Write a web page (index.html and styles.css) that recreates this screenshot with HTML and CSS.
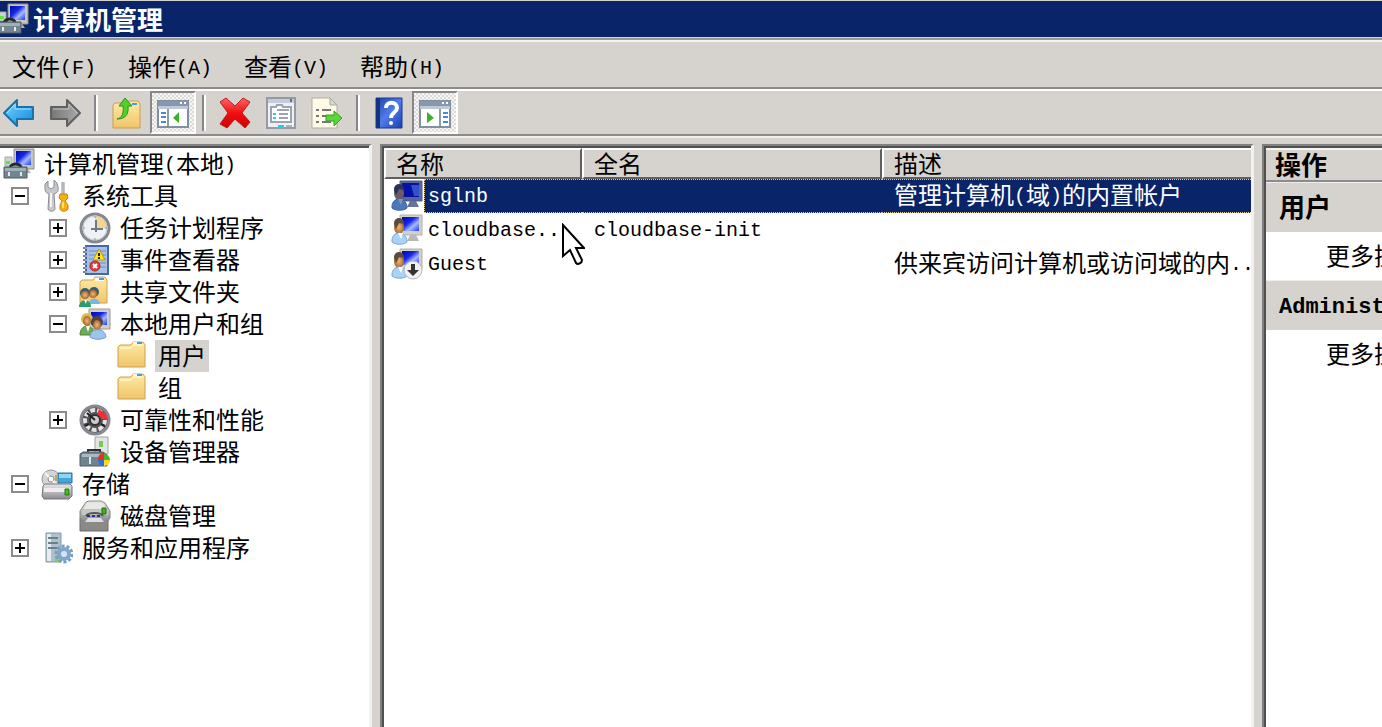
FILE: index.html
```html
<!DOCTYPE html>
<html lang="zh-CN">
<head>
    <meta charset="UTF-8">
    <meta name="viewport" content="width=device-width, initial-scale=1.0">
    <title>计算机管理</title>
    <link rel="stylesheet" href="styles.css">
</head>
<body>
    <!-- Icon definitions -->
    <svg class="sprite" aria-hidden="true">
        <defs>
            <linearGradient id="screen" x1="0" y1="0" x2="1" y2="1">
                <stop offset="0" stop-color="#0008a8"/><stop offset=".4" stop-color="#1428e8"/><stop offset=".65" stop-color="#a8b8ff"/><stop offset="1" stop-color="#1a3cf0"/>
            </linearGradient>
            <linearGradient id="blueArrow" x1="0" y1="0" x2="1" y2="1">
                <stop offset="0" stop-color="#7ad4ff"/><stop offset="1" stop-color="#0a8ae0"/>
            </linearGradient>
            <linearGradient id="greyArrow" x1="0" y1="0" x2="1" y2="0">
                <stop offset="0" stop-color="#777"/><stop offset="1" stop-color="#aaa"/>
            </linearGradient>
            <linearGradient id="folder" x1="0" y1="0" x2="0" y2="1">
                <stop offset="0" stop-color="#ffeaa6"/><stop offset="1" stop-color="#f0c56a"/>
            </linearGradient>
            <linearGradient id="metal" x1="0" y1="0" x2="0" y2="1">
                <stop offset="0" stop-color="#e8e8e8"/><stop offset="1" stop-color="#8a8d90"/>
            </linearGradient>
            <linearGradient id="red" x1="0" y1="0" x2="0" y2="1">
                <stop offset="0" stop-color="#f66"/><stop offset=".5" stop-color="#f01010"/><stop offset="1" stop-color="#d00000"/>
            </linearGradient>
            <linearGradient id="help" x1="0" y1="0" x2="1" y2="1">
                <stop offset="0" stop-color="#1c3fa8"/><stop offset=".5" stop-color="#4f7cea"/><stop offset="1" stop-color="#1a3fb4"/>
            </linearGradient>
            <radialGradient id="skin"><stop offset="0" stop-color="#f0b878"/><stop offset="1" stop-color="#a86830"/></radialGradient>
        </defs>
        <symbol id="i-computer" viewBox="0 0 32 32">
            <path fill="#c9c6c0" stroke="#8f8d88" d="M11 1h20v20H11z"/>
            <path fill="url(#screen)" d="M13 3h15v14H13z"/>
            <path fill="#b5b5b5" d="M17 21h8l3 4H15z"/>
            <path fill="#ccd3cc" stroke="#a4aaa4" d="M2 9h7v9H2z"/><path fill="#5ee63c" d="M3 13h4v3H3z"/>
            <path fill="none" stroke="#24292c" stroke-width="3" d="M7 21c0-7 11-6 11-1"/>
            <path fill="#728590" stroke="#4e5c64" d="M1 19h23v11H1z"/>
            <path fill="#9eb0b8" d="M2 20h21v3H2z"/><path stroke="#e2eaee" stroke-width="2" d="M6 24v4M18 24v4"/>
        </symbol>
        <symbol id="i-tools" viewBox="0 0 32 32">
            <path fill="#c5c7ca" stroke="#8b8d91" d="M7 1L4 4v5c0 3 2 4 4 5l-1 15c1 3 6 3 7 0l-1-15c3-1 5-3 4-7l-1-4-3-3v7l-3 2-3-2z"/>
            <path fill="#f4f4f4" d="M9 13h2v14H9z"/>
            <path stroke="#8f949a" stroke-width="3" d="M22 2v14"/><path stroke="#d8dade" d="M22 2v13"/>
            <path fill="#f6ae12" stroke="#c98308" d="M19 14h7l1 4-3 3 3 4v4c-2 3-7 3-8 0v-4l2-4-3-3z"/><path fill="#ffe070" d="M21 22h2v6h-2z"/>
        </symbol>
        <symbol id="i-clock" viewBox="0 0 32 32">
            <circle cx="16" cy="16" r="14" fill="#eef2f6" stroke="#85898e" stroke-width="3"/>
            <path fill="#f8d58c" d="M16 4a12 12 0 0 1 12 12H16z"/>
            <circle cx="16" cy="16" r="12" fill="none" stroke="#c2c8ce"/>
            <path fill="none" stroke="#6c7a88" stroke-width="2" d="M17 8v9h7M12 17h5v3"/>
            <path stroke="#8c949c" d="M16 4v2M16 26v3M4 16h2M26 16h2"/>
        </symbol>
        <symbol id="i-events" viewBox="0 0 32 32">
            <path fill="#a9c0e2" stroke="#4068ae" stroke-width="2" d="M7 2h22v28H7z"/>
            <path stroke="#6f8fc4" d="M10 7h17M10 11h17M10 15h17M10 19h17M10 23h17"/>
            <path stroke="#788" stroke-width="2" stroke-dasharray="2 2" d="M5 3v27"/><path stroke="#dde" stroke-dasharray="2 2" d="M7 3v27"/>
            <path fill="#ffe325" stroke="#b89c10" d="M20 5l6 11H14z"/><path stroke="#222" stroke-width="2" d="M20 9v3M20 13v2"/>
            <circle cx="16" cy="22" r="5" fill="#e04040" stroke="#b02020"/><path stroke="#fff" stroke-width="2" d="M14 20l4 4M18 20l-4 4"/>
        </symbol>
        <symbol id="i-folder" viewBox="0 0 32 32">
            <path fill="url(#folder)" stroke="#d0a04c" d="M1 7l2-2h11l2-3h10l2 3v22H1z"/>
            <path fill="#fff" d="M16 2h9v3h-9z"/><path fill="#3da0dc" d="M20 2h5v2h-5z"/>
            <path fill="none" stroke="#fff2bc" stroke-width="2" d="M3 8h11l2-3h10"/>
        </symbol>
        <symbol id="i-share" viewBox="0 0 32 32">
            <path fill="url(#folder)" stroke="#d0a04c" d="M1 6l2-2h11l2-3h10l2 3v23H1z"/>
            <path fill="#fff" d="M16 2h9v3h-9z"/><path fill="#3da0dc" d="M20 2h5v2h-5z"/>
            <circle cx="15" cy="16" r="5" fill="#35606c"/><circle cx="14" cy="18" r="4" fill="url(#skin)"/><path fill="#71b8e6" d="M10 28c0-7 10-7 11 0z"/>
            <circle cx="6" cy="17" r="5" fill="#35606c"/><circle cx="6" cy="19" r="4" fill="url(#skin)"/><path fill="#26a068" d="M0 31c0-9 12-9 12 0z"/><path fill="#fff" d="M5 24h3l-1 4z"/>
        </symbol>
        <symbol id="i-group" viewBox="0 0 32 32">
            <path fill="#d0cec8" stroke="#9b9993" d="M10 1h21v20H10z"/><path fill="url(#screen)" d="M12 4h16v13H12z"/>
            <circle cx="8" cy="11" r="6" fill="#d8bc50"/><ellipse cx="8" cy="13" rx="4" ry="5" fill="url(#skin)"/>
            <path fill="#6fad52" stroke="#4c8438" d="M1 27c0-12 14-12 14 0z"/><path fill="#fff" d="M7 18h4l-2 6z"/>
            <circle cx="18" cy="14" r="6" fill="#50443c"/><ellipse cx="18" cy="17" rx="4" ry="5" fill="url(#skin)"/>
            <path fill="#9bc4ee" stroke="#6a98ca" d="M11 29c0-10 15-10 16 0-4 3-12 3-16 0z"/>
        </symbol>
        <symbol id="i-perf" viewBox="0 0 32 32">
            <circle cx="16" cy="16" r="14" fill="#535358" stroke="#888892" stroke-width="3"/>
            <circle cx="16" cy="16" r="10" fill="none" stroke="#e2e2e2" stroke-width="4" stroke-dasharray="5 2"/>
            <path fill="#f03038" d="M20 5l7 5 2 6-8-2-3-3z"/>
            <circle cx="16" cy="16" r="5" fill="#ccc" stroke="#333" stroke-width="2"/><path stroke="#222" stroke-width="2" d="M16 16L8 9M6 22l4-2M26 22l-4-2"/>
        </symbol>
        <symbol id="i-device" viewBox="0 0 32 32">
            <path fill="#e2e5e3" stroke="#a0a4a2" d="M16 1h13v17H16z"/><path fill="#72cc50" d="M20 5h4v6h-4z"/>
            <path fill="none" stroke="#2c3034" stroke-width="2" d="M9 17v-3h12v3"/>
            <path fill="#708490" stroke="#4c5c66" d="M1 18l3-2h20l4 3v11H1z"/><path fill="#a9bac2" d="M3 18h23v3H3z"/><path stroke="#dfe8ec" stroke-width="2" d="M11 21v7"/>
            <path fill="#e83020" d="M25 17v7h-6a6 6 0 0 1 6-7z"/><path fill="#42b828" d="M25 18a6 6 0 0 1 6 6h-6z"/><path fill="#ffd820" d="M31 24a6 6 0 0 1-6 6v-6z"/><path fill="#2870e0" d="M25 30a6 6 0 0 1-6-6h6z"/>
        </symbol>
        <symbol id="i-storage" viewBox="0 0 32 32">
            <circle cx="10" cy="11" r="9" fill="#d5d5d5" stroke="#969696"/><circle cx="10" cy="11" r="3" fill="#fff" stroke="#888"/>
            <path stroke="#f6f6f6" stroke-width="2" d="M4 5l4 4M12 13l4 4"/>
            <path fill="#42a6d8" stroke="#2874a6" d="M17 5h14v10H17z"/><path fill="#90d6f4" d="M18 6h12v4H18z"/><path fill="#b8a860" d="M14 7h3v6h-3z"/>
            <path fill="url(#metal)" stroke="#77777d" d="M2 18l2-2h25l2 2v10l-3 3H3l-2-3z"/><path fill="#f0ecf0" d="M3 20h26v4H3z"/><path fill="#42bd18" stroke="#277811" d="M24 21h4v6h-4z"/>
        </symbol>
        <symbol id="i-disk" viewBox="0 0 32 32">
            <path fill="#8a8a86" stroke="#6c6c6a" d="M1 18h28v13H1z"/>
            <path fill="url(#metal)" stroke="#878787" d="M7 2l3-1h12l4 2 5 8v7l-2 3H3l-2-3v-7z"/><path fill="#e8e8e4" d="M8 3h15l5 6H4z"/>
            <path fill="#c8c8c4" d="M3 10h26v5H3z"/><path fill="#36bb12" stroke="#246810" d="M23 8h4v6h-4z"/>
            <path fill="none" stroke="#555" stroke-width="2" d="M7 16c2-4 15-4 17 0"/><path stroke="#2430a0" stroke-width="2" d="M8 16h14" stroke-dasharray="3 2"/>
            <path fill="#dedede" d="M9 18h13l3 4H6z"/>
        </symbol>
        <symbol id="i-services" viewBox="0 0 32 32">
            <path fill="#aec0cb" stroke="#8799a6" d="M5 1h15v29H5z"/><path fill="#e6edf1" d="M6 2h4v27H6z"/><path stroke="#6c808c" stroke-width="2" d="M7 6h10M7 11h10M7 16h10"/>
            <path fill="#79dc50" d="M14 26h4v3h-4z"/>
            <circle cx="23" cy="22" r="8" fill="none" stroke="#789cc0" stroke-width="3" stroke-dasharray="3 2"/><circle cx="23" cy="22" r="5" fill="#d6e5f2" stroke="#7fa6cc" stroke-width="4"/>
        </symbol>
        <symbol id="i-user" viewBox="0 0 32 32">
            <path fill="#d4d1cb" stroke="#b1afa8" d="M9 1h22v20H9z"/><path fill="url(#screen)" d="M11 3h17v14H11z"/><path fill="#b8b8b8" d="M19 21h6l3 6H16z"/>
            <circle cx="8" cy="9" r="5" fill="#5c4c40"/><ellipse cx="8" cy="13" rx="5" ry="7" fill="url(#skin)"/><path fill="#5c4c40" d="M3 10c2-7 9-5 10 0l-5-1-3 6z"/>
            <path fill="#a8d2f6" stroke="#78a8d6" d="M1 28c-1-12 15-12 15 0-3 3-12 3-15 0z"/><path fill="#fff" d="M7 19h5l-2 6z"/>
        </symbol>
        <symbol id="i-user-selected" viewBox="0 0 32 32">
            <path fill="#59669a" stroke="#4a5a90" d="M9 1h22v20H9z"/><path fill="#0612a4" d="M11 3h17v14H11z"/><path fill="#3450cc" d="M20 5h8v11h-5z"/><path fill="#66719c" d="M19 21h6l3 6H16z"/>
            <circle cx="8" cy="9" r="5" fill="#30345c"/><ellipse cx="8" cy="13" rx="5" ry="7" fill="#6c5c68"/><path fill="#2c3058" d="M3 10c2-7 9-5 10 0l-5-1-3 6z"/>
            <path fill="#4a78b8" stroke="#3560a0" d="M1 28c-1-12 15-12 15 0-3 3-12 3-15 0z"/><path fill="#8294bc" d="M7 19h5l-2 6z"/>
        </symbol>
        <symbol id="i-guest" viewBox="0 0 32 32">
            <use href="#i-user"/>
            <circle cx="22" cy="22" r="9" fill="#f1f1f1" stroke="#b8b8b8"/><path fill="#333" d="M20 16h4v6h4l-6 6-6-6h4z"/>
        </symbol>
        <symbol id="i-back" viewBox="0 0 32 32">
            <path fill="url(#blueArrow)" stroke="#1b72a8" stroke-width="2" stroke-linejoin="round" d="M1 16L14 3v7h16v12H14v7z"/>
            <path fill="none" stroke="#a6e4ff" d="M4 16l8-9v5h16"/>
        </symbol>
        <symbol id="i-forward" viewBox="0 0 32 32">
            <path fill="url(#greyArrow)" stroke="#606060" stroke-width="2" stroke-linejoin="round" d="M31 16L18 3v7H2v12h16v7z"/>
            <path fill="none" stroke="#c4c4c4" d="M4 12h16V7l8 9"/>
        </symbol>
        <symbol id="i-up" viewBox="0 0 32 32">
            <path fill="url(#folder)" stroke="#cd9d48" d="M2 8l2-2h11l3-2h9l2 3v24H2z"/><path fill="#3da0dc" d="M21 6h5v2h-5z"/>
            <path fill="#4cd22c" stroke="#2a9418" d="M6 22c5-1 7-6 6-13H8l6-8 7 8h-4c1 9-3 13-11 13z"/>
        </symbol>
        <symbol id="i-tree" viewBox="0 0 32 32">
            <path fill="#fff" stroke="#8090a4" stroke-width="2" d="M1 4h30v26H1z"/><path fill="#8797ad" d="M1 4h30v5H1z"/><path fill="#bdc9d8" d="M1 9h30v3H1z"/>
            <path fill="#fff" d="M23 5h2v2h-2zM27 5h2v2h-2z"/><path stroke="#8c9cb0" stroke-width="2" d="M11 12v17"/>
            <path stroke="#4a8ad2" stroke-width="2" d="M4 16h5M4 20h5M4 25h5"/><path fill="#36b428" d="M22 15v11l-6-5z"/>
        </symbol>
        <symbol id="i-pane" viewBox="0 0 32 32">
            <path fill="#fff" stroke="#8090a4" stroke-width="2" d="M1 4h30v26H1z"/><path fill="#8797ad" d="M1 4h30v5H1z"/><path fill="#bdc9d8" d="M1 9h30v3H1z"/>
            <path fill="#fff" d="M23 5h2v2h-2zM27 5h2v2h-2z"/><path stroke="#8c9cb0" stroke-width="2" d="M21 12v17"/>
            <path stroke="#4a8ad2" stroke-width="2" d="M24 16h5M24 20h5M24 25h5"/><path fill="#36b428" d="M8 15v11l7-5z"/>
        </symbol>
        <symbol id="i-delete" viewBox="0 0 32 32">
            <path fill="url(#red)" stroke="#b82020" stroke-linejoin="round" d="M1 5l6-4 9 8 8-8 7 4-8 11 8 9-5 6-10-9-8 9-7-4 8-11z"/>
        </symbol>
        <symbol id="i-props" viewBox="0 0 32 32">
            <path fill="#eef1f4" stroke="#949ba4" stroke-width="2" d="M2 1h28v30H2z"/><path fill="#c3ccd8" d="M3 2h26v4H3z"/><path fill="#5b6d8a" d="M25 2h2v3h-2z"/>
            <path fill="#fff" stroke="#9ba4ae" stroke-width="2" d="M6 10h5l1-2h5l1 2h8v15H6z"/><path stroke="#9aa4ae" stroke-width="2" d="M12 13h12M14 17h9M14 21h9"/>
            <path fill="#28c8f0" d="M8 16h3v2H8zM8 20h3v2H8zM13 28h6v3h-6z"/><path fill="#aab4c0" d="M21 28h6v2h-6z"/>
        </symbol>
        <symbol id="i-export" viewBox="0 0 32 32">
            <path fill="#fffbe6" stroke="#b2aea0" d="M1 1h18l7 7v23H1z"/><path fill="#d8d8d8" stroke="#a9a9a0" d="M19 1v7h7z"/>
            <path stroke="#777" stroke-width="2" d="M5 13h3M11 13h9M5 19h3M11 19h9M5 25h3M11 25h9"/>
            <path fill="#5cd43c" stroke="#3aa020" d="M15 18h8v-4l8 7-8 8v-5h-8z"/>
        </symbol>
        <symbol id="i-help" viewBox="0 0 32 32">
            <path fill="url(#help)" stroke="#173a94" d="M3 1h26v30H3z"/><path fill="#14327e" d="M3 1h4v30H3z"/>
            <path fill="none" stroke="#fff" stroke-width="4" d="M13 11c0-7 11-7 11 0 0 4-6 5-6 10"/><circle cx="18" cy="26" r="2" fill="#fff"/>
        </symbol>
    </svg>

    <div class="window">
        <header class="title-bar">
            <svg class="icon"><use href="#i-computer"/></svg>
            <h1>计算机管理</h1>
        </header>

        <nav class="menu-bar">
            <button>文件<span class="latin">(F)</span></button>
            <button>操作<span class="latin">(A)</span></button>
            <button>查看<span class="latin">(V)</span></button>
            <button>帮助<span class="latin">(H)</span></button>
        </nav>

        <div class="toolbar">
            <button aria-label="后退"><svg class="icon"><use href="#i-back"/></svg></button>
            <button aria-label="前进"><svg class="icon"><use href="#i-forward"/></svg></button>
            <span class="separator"></span>
            <button aria-label="上移"><svg class="icon"><use href="#i-up"/></svg></button>
            <button class="pressed" aria-label="显示树"><svg class="icon"><use href="#i-tree"/></svg></button>
            <span class="separator"></span>
            <button aria-label="删除"><svg class="icon"><use href="#i-delete"/></svg></button>
            <button aria-label="属性"><svg class="icon"><use href="#i-props"/></svg></button>
            <button aria-label="导出列表"><svg class="icon"><use href="#i-export"/></svg></button>
            <span class="separator"></span>
            <button aria-label="帮助"><svg class="icon"><use href="#i-help"/></svg></button>
            <button class="pressed" aria-label="显示操作窗格"><svg class="icon"><use href="#i-pane"/></svg></button>
        </div>

        <main class="content">
            <section class="panel tree">
                <div class="node"><svg class="icon"><use href="#i-computer"/></svg><span class="label">计算机管理<span class="latin">(</span>本地<span class="latin">)</span></span></div>
                <ul>
                    <li>
                        <div class="node"><button class="toggle open" aria-label="折叠"></button><svg class="icon"><use href="#i-tools"/></svg><span class="label">系统工具</span></div>
                        <ul>
                            <li><div class="node"><button class="toggle" aria-label="展开"></button><svg class="icon"><use href="#i-clock"/></svg><span class="label">任务计划程序</span></div></li>
                            <li><div class="node"><button class="toggle" aria-label="展开"></button><svg class="icon"><use href="#i-events"/></svg><span class="label">事件查看器</span></div></li>
                            <li><div class="node"><button class="toggle" aria-label="展开"></button><svg class="icon"><use href="#i-share"/></svg><span class="label">共享文件夹</span></div></li>
                            <li>
                                <div class="node"><button class="toggle open" aria-label="折叠"></button><svg class="icon"><use href="#i-group"/></svg><span class="label">本地用户和组</span></div>
                                <ul>
                                    <li><div class="node leaf"><svg class="icon"><use href="#i-folder"/></svg><span class="label current">用户</span></div></li>
                                    <li><div class="node leaf"><svg class="icon"><use href="#i-folder"/></svg><span class="label">组</span></div></li>
                                </ul>
                            </li>
                            <li><div class="node"><button class="toggle" aria-label="展开"></button><svg class="icon"><use href="#i-perf"/></svg><span class="label">可靠性和性能</span></div></li>
                            <li><div class="node leaf"><svg class="icon"><use href="#i-device"/></svg><span class="label">设备管理器</span></div></li>
                        </ul>
                    </li>
                    <li>
                        <div class="node"><button class="toggle open" aria-label="折叠"></button><svg class="icon"><use href="#i-storage"/></svg><span class="label">存储</span></div>
                        <ul>
                            <li><div class="node leaf"><svg class="icon"><use href="#i-disk"/></svg><span class="label">磁盘管理</span></div></li>
                        </ul>
                    </li>
                    <li><div class="node"><button class="toggle" aria-label="展开"></button><svg class="icon"><use href="#i-services"/></svg><span class="label">服务和应用程序</span></div></li>
                </ul>
            </section>

            <section class="panel list">
                <table>
                    <colgroup><col class="col-name"><col class="col-full"><col></colgroup>
                    <thead>
                        <tr><th>名称</th><th>全名</th><th>描述</th></tr>
                    </thead>
                    <tbody>
                        <tr class="selected">
                            <td class="name"><div class="user"><svg class="icon"><use href="#i-user-selected"/></svg><span class="user-name"><span class="latin">sglnb</span></span></div></td>
                            <td></td>
                            <td>管理计算机<span class="latin">(</span>域<span class="latin">)</span>的内置帐户</td>
                        </tr>
                        <tr>
                            <td class="name"><div class="user"><svg class="icon"><use href="#i-user"/></svg><span class="user-name"><span class="latin">cloudbase..</span></span></div></td>
                            <td><span class="latin">cloudbase-init</span></td>
                            <td></td>
                        </tr>
                        <tr>
                            <td class="name"><div class="user"><svg class="icon"><use href="#i-guest"/></svg><span class="user-name"><span class="latin">Guest</span></span></div></td>
                            <td></td>
                            <td>供来宾访问计算机或访问域的内<span class="latin">..</span></td>
                        </tr>
                    </tbody>
                </table>
                <svg class="cursor" viewBox="0 0 24 42"><path fill="#fff" stroke="#000" stroke-width="2" d="M2 2v31l7-6 6 13c2 2 6 0 6-3l-6-12h8z"/></svg>
            </section>

            <aside class="panel actions">
                <h2>操作</h2>
                <h3>用户</h3>
                <a href="#">更多操作</a>
                <h3><span class="latin">Administrator</span></h3>
                <a href="#">更多操作</a>
            </aside>
        </main>
    </div>
</body>
</html>
```
FILE: styles.css
```css
* {
    box-sizing: border-box;
}
body {
    margin: 0;
    background-color: #d6d3ce;
    color: #000;
    font-family: "Noto Sans CJK SC", sans-serif;
    font-size: 24px;
    line-height: 32px;
    white-space: nowrap;
}
button {
    padding: 0;
    border: none;
    background: none;
    color: inherit;
    font: inherit;
}
h1, h2, h3 {
    margin: 0;
    font-size: 26px;
    font-weight: bold;
}
ul {
    margin: 0;
    padding: 0;
    list-style: none;
}
.sprite {
    position: absolute;
    width: 0;
    height: 0;
}
.icon {
    display: block;
    flex: none;
    width: 32px;
    height: 32px;
}
.latin {
    font-family: "Liberation Mono", monospace;
    font-size: 20px;
    line-height: 20px;
    vertical-align: 2px;
}
.window {
    display: flex;
    flex-direction: column;
    height: 100vh;
    overflow: hidden;
}
.title-bar {
    display: flex;
    align-items: center;
    gap: 4px;
    height: 38px;
    margin-left: -3px;
    border-top: 1px solid #d6d3ce;
    border-bottom: 1px solid #d6d3ce;
    background-color: #0a246a;
    color: #fff;
}
.menu-bar {
    display: flex;
    gap: 32px;
    height: 51px;
    padding: 4px 0 0 12px;
    border-top: 2px solid #9a9896;
    border-bottom: 2px solid #8c8a8a;
    box-shadow: inset 0 2px #f4f3f0;
}
.toolbar {
    display: flex;
    align-items: center;
    height: 47px;
    margin-left: -4px;
    border-top: 2px solid #fff;
    border-bottom: 2px solid #8c8a8a;
}
.toolbar button {
    display: flex;
    align-items: center;
    justify-content: center;
    width: 46px;
    height: 43px;
    border: 2px solid transparent;
}
.toolbar .pressed {
    border-color: #87858a #fff #fff #87858a;
    background: repeating-conic-gradient(#dcdad5 0 25%, #f8f7f5 0 50%) 0 0 / 4px 4px;
}
.separator {
    width: 4px;
    height: 36px;
    margin: 0 6px;
    border-left: 2px solid #87858a;
    border-right: 2px solid #fff;
}
.content {
    display: grid;
    grid-template-columns: 372px 1fr 120px;
    gap: 8px;
    flex: 1;
    min-height: 0;
    padding-top: 6px;
    border-top: 2px solid #f0efec;
}
.panel {
    min-width: 0;
    overflow: hidden;
    padding-top: 2px;
    border-top: 2px solid #808080;
    border-right: 3px solid #f2f1ee;
    background-color: #fff;
    box-shadow: inset 0 2px #505050;
}

/* Tree */
.node {
    display: flex;
    align-items: center;
    height: 32px;
    padding-left: 3px;
}
.leaf {
    padding-left: 41px;
}
.tree ul ul {
    padding-left: 38px;
}
.label {
    margin-left: 6px;
    padding: 0 3px 2px;
    line-height: 30px;
}
.current {
    background-color: #d6d3ce;
}
.toggle {
    width: 18px;
    height: 18px;
    margin: 0 12px 0 8px;
    border: 2px solid #8c8c8c;
    background:
        linear-gradient(#000, #000) center / 10px 2px no-repeat,
        linear-gradient(#000, #000) center / 2px 10px no-repeat;
}
.toggle.open {
    background: linear-gradient(#000, #000) center / 10px 2px no-repeat;
}

/* User list */
.list {
    position: relative;
    padding-left: 2px;
    border-left: 2px solid #808080;
    box-shadow: inset 2px 2px #505050;
}
table {
    width: 100%;
    table-layout: fixed;
    border-collapse: separate;
    border-spacing: 0;
}
.col-name {
    width: 198px;
}
.col-full {
    width: 300px;
}
th {
    height: 31px;
    padding: 0 10px 2px;
    border-top: 2px solid #fff;
    border-left: 2px solid #fff;
    border-right: 2px solid #606060;
    border-bottom: 2px solid #606060;
    background-color: #d6d3ce;
    font-weight: normal;
    line-height: 25px;
    text-align: left;
}
th:last-child {
    border-right: none;
}
td {
    height: 34px;
    padding: 0 0 4px 12px;
    overflow: hidden;
    line-height: 28px;
}
td.name {
    padding: 0 0 0 7px;
}
.user {
    display: flex;
    align-items: center;
    height: 34px;
}
.user .icon {
    margin-right: 1px;
}
.user-name {
    flex: 1;
    height: 34px;
    padding: 1px 0 0 4px;
}
.selected td:not(.name), .selected .user-name {
    border-top: 1px dotted #e8cf98;
    border-bottom: 1px dotted #e8cf98;
    background-color: #0a246a;
    color: #fff;
}
.selected .user-name {
    padding: 0 0 0 3px;
    border-left: 1px dotted #e8cf98;
}
.cursor {
    position: absolute;
    top: 77px;
    left: 179px;
    width: 24px;
    height: 42px;
}

/* Actions */
.actions {
    padding-left: 2px;
    border-left: 2px solid #808080;
    border-right: none;
    box-shadow: inset 2px 2px #505050;
}
.actions h2 {
    height: 34px;
    padding-left: 9px;
    border-top: 2px solid #f4f3f0;
    border-bottom: 2px solid #8c8a92;
    background-color: #d6d3ce;
    line-height: 28px;
}
.actions h3 {
    height: 50px;
    padding-left: 13px;
    border-top: 1px solid #eeede8;
    background-color: #d6d3ce;
    line-height: 46px;
}
.actions h3 .latin {
    font-size: 22px;
}
.actions a {
    display: block;
    height: 48px;
    padding-left: 60px;
    color: #000;
    line-height: 46px;
    text-decoration: none;
}
```
